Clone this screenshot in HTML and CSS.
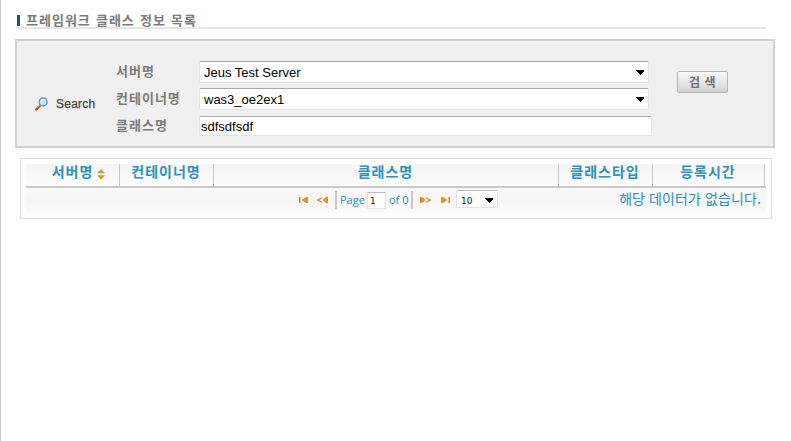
FILE: index.html
```html
<!DOCTYPE html>
<html lang="ko">
<head>
<meta charset="utf-8">
<title>프레임워크 클래스 정보 목록</title>
<link rel="stylesheet" href="styles.css">
</head>
<body>
<main class="page">
  <h1 class="title"><span>프레임워크 클래스 정보 목록</span></h1>
  <form class="search">
    <div class="search-caption">
      <svg width="14" height="14" viewBox="0 0 14 14"><path d="M1.3 12.3 5.2 8.5" stroke="#b5532c" stroke-width="2.4" stroke-linecap="round"/><path d="M2.3 10.5 4.6 8.2" stroke="#e9a06c" stroke-width="1"/><circle cx="8.2" cy="5" r="4" fill="#b9e6fa" stroke="#5795c7" stroke-width="1.3"/><path d="M5.8 4.8Q6.4 2.6 8.8 2.5" stroke="#fff" stroke-width="1.4" fill="none"/></svg>
      <span>Search</span>
    </div>
    <div class="fields">
      <div class="row"><label>서버명</label><div class="box select"><span>Jeus Test Server</span><svg width="8" height="5" viewBox="0 0 8 5" shape-rendering="crispEdges"><path d="M0 0H8V1L4.5 4.5H3.5L0 1Z"/></svg></div></div>
      <div class="row"><label>컨테이너명</label><div class="box select"><span>was3_oe2ex1</span><svg width="8" height="5" viewBox="0 0 8 5" shape-rendering="crispEdges"><path d="M0 0H8V1L4.5 4.5H3.5L0 1Z"/></svg></div></div>
      <div class="row"><label>클래스명</label><div class="box text"><span>sdfsdfsdf</span></div></div>
    </div>
    <button class="submit" type="button">검 색</button>
  </form>
  <section class="grid">
    <div class="head">
      <div class="th sorted">서버명<svg width="8" height="11" viewBox="0 0 8 11"><path d="M4 0 8 4.3H0ZM0 6.3H8L4 10.8Z" fill="#dc9432"/></svg></div>
      <div class="th">컨테이너명</div>
      <div class="th">클래스명</div>
      <div class="th">클래스타입</div>
      <div class="th">등록시간</div>
    </div>
    <div class="foot">
      <div class="pager">
        <svg class="first" width="9" height="6" viewBox="0 0 9 6" fill="#e49128"><path d="M0 0H1.6V6H0ZM9 0V6H7L2.5 3 7 0Z"/></svg>
        <svg class="prev" width="11" height="6" viewBox="0 0 11 6" fill="#e49128"><path d="M11 0V6H9L5.3 3 9 0ZM5 0V1.3L2.2 3 5 4.7V6L0 3.5V2.5Z"/></svg>
        <i class="bar"></i>
        <span class="page-label">Page</span>
        <div class="page-no">1</div>
        <span class="total">of 0</span>
        <i class="bar"></i>
        <svg class="next" width="11" height="6" viewBox="0 0 11 6" fill="#e49128"><path d="M0 0V6H2L5.7 3 2 0ZM6 0V1.3L8.8 3 6 4.7V6L11 3.5V2.5Z"/></svg>
        <svg class="last" width="9" height="6" viewBox="0 0 9 6" fill="#e49128"><path d="M9 0H7.4V6H9ZM0 0V6H2L6.5 3 2 0Z"/></svg>
        <div class="size"><span>10</span><svg width="8" height="5" viewBox="0 0 8 5" shape-rendering="crispEdges"><path d="M0 0H8V1L4.5 4.5H3.5L0 1Z"/></svg></div>
      </div>
      <p class="empty">해당 데이터가 없습니다.</p>
    </div>
  </section>
</main>
</body>
</html>
```
FILE: styles.css
```css
* { box-sizing: border-box; }
body { margin: 0; background: #fff; font-family: "Liberation Sans", "Noto Sans CJK KR", sans-serif; }
svg { display: block; flex: none; }
.page { height: 441px; border-left: 1px solid #ccc; padding: 12px 16px 0 14px; overflow: hidden; }

.title { width: 750px; height: 17px; margin: 0 0 0 1px; border-bottom: 2px solid #e6e6e6; display: flex; align-items: center; font: 700 13px/15px "Noto Sans CJK KR", sans-serif; letter-spacing: 1px; word-spacing: .5px; color: #7b7b7b; white-space: nowrap; }
.title::before { content: ""; width: 3px; height: 11px; margin: 1px 6px 0 1px; background: #155583; }

.search { width: 760px; height: 109px; margin-top: 10px; border: 2px solid #d0d0d0; background: #f0f0f0; display: flex; align-items: flex-start; }
.search-caption { width: 99px; padding: 55px 0 0 18px; display: flex; gap: 7px; font-size: 12px; line-height: 16px; letter-spacing: .25px; color: #444; -webkit-text-stroke: .25px #444; }
.search-caption svg { margin-top: 1px; }
.fields { width: 536px; padding-top: 20px; display: flex; flex-direction: column; gap: 5px; }
.row { display: flex; height: 22px; align-items: center; }
.row label { width: 83px; padding-bottom: 2px; font: 700 13px/20px "Noto Sans CJK KR", sans-serif; letter-spacing: 1px; color: #7b7b7b; white-space: nowrap; }
.box { height: 22px; border: 1px solid #e1e4e7; border-top-color: #a9abaf; border-radius: 2px; background: #fff; display: flex; align-items: center; font-size: 13px; color: #000; }
.select { width: 450px; justify-content: space-between; padding: 0 4px; }
.text { width: 453px; height: 20px; padding-left: 1px; }
.submit { width: 51px; height: 22px; margin: 30px 0 0 25px; padding: 0; border: 1px solid #b5b5b5; border-radius: 2px; background: linear-gradient(#fafafa, #d3d3d3); font: 700 12px/20px "Noto Sans CJK KR", sans-serif; letter-spacing: .5px; color: #707070; }

.grid { width: 752px; height: 61px; margin: 10px 0 0 5px; border: 1px solid #ddd; padding: 5px; }
.head { height: 24px; border-bottom: 2px solid #c8c8c8; background: linear-gradient(#f5f5f5, #fbfbfb); display: grid; grid-template-columns: 94px 94px 345px 94px 112px; }
.th { border-right: 1px solid #c8c8c8; display: flex; justify-content: center; gap: 4px; font: 700 14px/14px "Noto Sans CJK KR", sans-serif; letter-spacing: 1px; color: #2d91b9; white-space: nowrap; }
.th:not(.sorted) { padding-right: 1px; }
.sorted { padding-left: 12px; }
.th svg { margin-top: 5px; }
.foot { height: 25px; background: linear-gradient(#f9f9f9, #f5f5f5 55%, #fbfbfb); display: flex; justify-content: space-between; padding: 0 5px 0 273px; }
.pager { display: flex; height: 24px; align-items: center; font: 11px/16px "Open Sans", sans-serif; color: #2d91b9; }
.prev { margin-left: 9px; }
.bar { width: 2px; height: 18px; background: #c8c8c8; margin-left: 7px; }
.page-label { width: 27px; margin-left: 3px; }
.page-no { width: 19px; height: 17px; border: 1px solid #dfe5e9; border-top-color: #b5b8bb; background: #fff; padding: 2px 0 0 2px; font: 9px/13px "DejaVu Sans", sans-serif; color: #222; }
.total { width: 20px; margin-left: 3px; white-space: nowrap; }
.total + .bar { margin-left: 2px; }
.next { margin-left: 7px; }
.last { margin-left: 10px; }
.size { width: 42px; height: 18px; margin: -2px 0 0 6px; border: 1px solid #dfe3e6; border-top-color: #b5b8bb; border-radius: 2px; background: #fff; display: flex; align-items: center; justify-content: space-between; padding: 3px 4px 0; font: 9px/12px "DejaVu Sans", sans-serif; color: #111; }
.empty { margin: 0; font: 400 14px/20px "Noto Sans CJK KR", sans-serif; letter-spacing: .1px; color: #2d91b9; white-space: nowrap; }
```
